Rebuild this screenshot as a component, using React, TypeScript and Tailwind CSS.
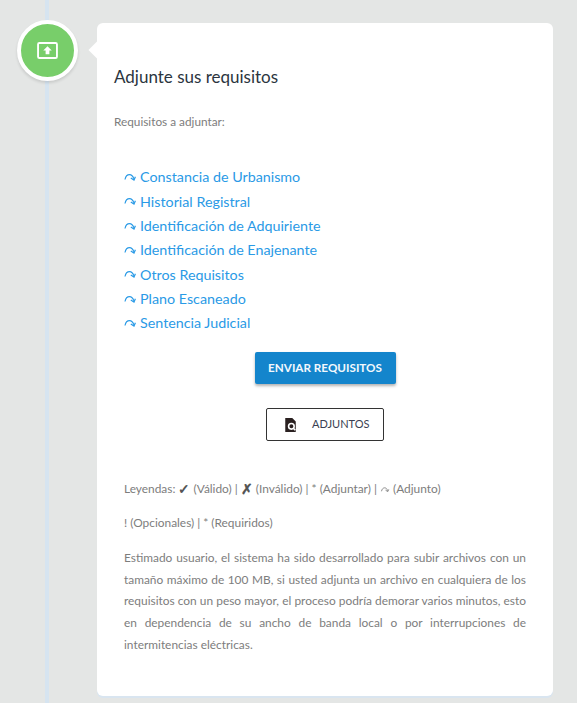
const requisitos = [
  'Constancia de Urbanismo',
  'Historial Registral',
  'Identificación de Adquiriente',
  'Identificación de Enajenante',
  'Otros Requisitos',
  'Plano Escaneado',
  'Sentencia Judicial',
];

function RedoIcon({ className }: { className?: string }) {
  return (
    <svg viewBox="0 0 12 10" className={className} fill="none" stroke="currentColor" strokeWidth="1.2">
      <path d="M1 7.5C1.6 4.4 3.4 2.6 5.5 2.6C7.5 2.6 9 4.2 9.8 6.8" />
      <path d="M6.8 6L10 8L11.4 4.8" />
    </svg>
  );
}

export default function App() {
  return (
    <div className="relative h-[703px] w-[577px] overflow-hidden bg-[#e4e6e5] font-['Lato',sans-serif]">
      {/* linea de tiempo */}
      <div className="absolute left-[45px] top-0 h-full w-[4px] bg-[#d6e4f0]" />

      <div className="flex items-start pl-[17px] pt-[20px]">
        <div className="relative z-10 flex h-[61px] w-[61px] shrink-0 items-center justify-center rounded-full border-[4px] border-white bg-[#78ce6a] shadow-[0_2px_3px_rgba(0,0,0,0.12)]">
          <svg viewBox="0 0 22 18" className="h-[17px] w-[21px]" fill="none">
            <rect x="1" y="1" width="20" height="16" rx="1.5" stroke="white" strokeWidth="2" />
            <path d="M11 4.5L15.5 9H13V13H9V9H6.5Z" fill="white" />
          </svg>
        </div>

        <div className="relative ml-[19px] mt-[3px] h-[673px] w-[456px] rounded-[6px] bg-white px-[17px] pt-[42px] shadow-[0_2px_0_#d9e5f0]">
          <div className="absolute left-[-6px] top-[21px] h-[12px] w-[12px] rotate-45 bg-white" />
          <h2 className="text-[17px] leading-6 text-[#2b3540]">Adjunte sus requisitos</h2>
          <p className="mt-[24px] text-[11.8px] leading-[18px] text-[#7d7d7d]">Requisitos a adjuntar:</p>

          <ul className="mt-[34px] pl-[10px]">
            {requisitos.map((r) => (
              <li key={r} className="flex h-[24.3px] items-center gap-[4px] text-[14.3px] text-[#2a9ae6]">
                <RedoIcon className="h-[10px] w-[12px] shrink-0" />
                <span>{r}</span>
              </li>
            ))}
          </ul>

          <div className="mt-[17px] flex flex-col items-center">
            <button className="h-[32px] w-[141px] rounded-[2px] bg-[#1485cc] text-[11.7px] font-bold text-[#f2f8fc] shadow-[0_2px_3px_rgba(0,0,0,0.3)]">
              ENVIAR REQUISITOS
            </button>
            <button className="mt-[24px] flex h-[33px] w-[118px] items-center rounded-[2px] border border-[#333] bg-white pl-[17px] text-[11px] text-[#3a3f52]">
              <svg viewBox="0 0 14 16" className="h-[14px] w-[13px]">
                <path d="M1 0H9L13 4V16H1Z" fill="#2a2020" />
                <circle cx="8" cy="9.5" r="3.2" fill="none" stroke="white" strokeWidth="1.8" />
                <path d="M10 11.5L12.5 14" stroke="white" strokeWidth="1.8" />
              </svg>
              <span className="ml-[15px]">ADJUNTOS</span>
            </button>
          </div>

          <div className="px-[10px] text-[11.9px] text-[#7d7d7d]">
            <p className="mt-[39px] flex items-center leading-[18px]">
              Leyendas:&nbsp;
              <span className="text-[14px] font-bold leading-[18px] text-[#555]">✓</span>
              &nbsp;(Válido) |&nbsp;
              <span className="text-[14px] font-bold leading-[18px] text-[#555]">✗</span>&nbsp;(Inválido) | * (Adjuntar) |&nbsp;
              <RedoIcon className="h-[7px] w-[10px] text-[#777]" />&nbsp;(Adjunto)
            </p>
            <p className="mt-[16px] leading-[18px]">! (Opcionales) | * (Requiridos)</p>
            <p className="mt-[15px] text-justify leading-[21.7px]">
              Estimado usuario, el sistema ha sido desarrollado para subir archivos con un tamaño máximo de 100 MB, si
              usted adjunta un archivo en cualquiera de los requisitos con un peso mayor, el proceso podría demorar
              varios minutos, esto en dependencia de su ancho de banda local o por interrupciones de intermitencias
              eléctricas.
            </p>
          </div>
        </div>
      </div>
    </div>
  );
}
